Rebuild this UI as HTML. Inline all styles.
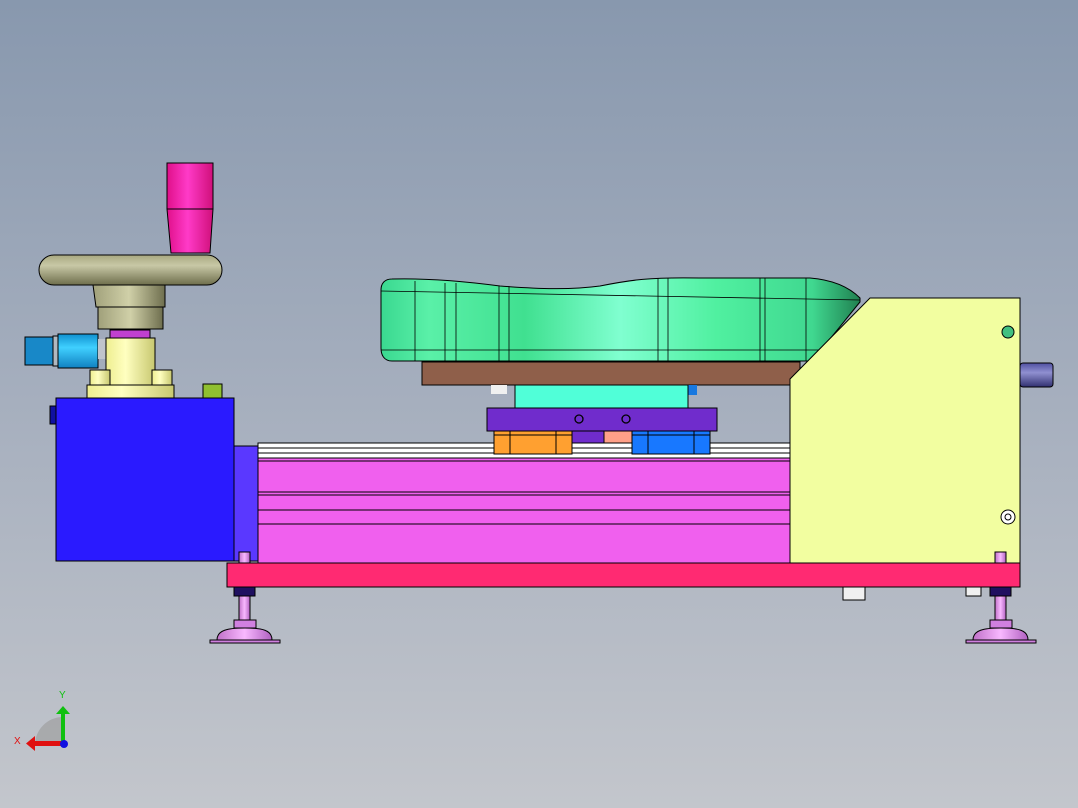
<!DOCTYPE html>
<html><head><meta charset="utf-8"><style>
html,body{margin:0;padding:0;width:1078px;height:808px;overflow:hidden}
svg{display:block}
</style></head><body>
<svg width="1078" height="808" viewBox="0 0 1078 808" xmlns="http://www.w3.org/2000/svg" font-family="Liberation Sans, sans-serif">
<defs>
<linearGradient id="bg" x1="0" y1="0" x2="0" y2="1"><stop offset="0" stop-color="#8898ae"/><stop offset="0.5" stop-color="#a6afbe"/><stop offset="1" stop-color="#c3c6cc"/></linearGradient>
<linearGradient id="pink" x1="0" x2="1"><stop offset="0" stop-color="#e0108a"/><stop offset="0.45" stop-color="#ff3ac8"/><stop offset="1" stop-color="#d0107a"/></linearGradient>
<linearGradient id="torus" x1="0" y1="0" x2="0" y2="1"><stop offset="0" stop-color="#a8a880"/><stop offset="0.35" stop-color="#c8c8a6"/><stop offset="1" stop-color="#6e6e4c"/></linearGradient>
<linearGradient id="hub" x1="0" x2="1"><stop offset="0" stop-color="#a0a07a"/><stop offset="0.5" stop-color="#d0d0a8"/><stop offset="1" stop-color="#6e6e4e"/></linearGradient>
<linearGradient id="cyl" x1="0" y1="0" x2="0" y2="1"><stop offset="0" stop-color="#1090d0"/><stop offset="0.4" stop-color="#40d0ff"/><stop offset="1" stop-color="#1080c0"/></linearGradient>
<linearGradient id="yel" x1="0" x2="1"><stop offset="0" stop-color="#eeee90"/><stop offset="0.4" stop-color="#ffffc0"/><stop offset="1" stop-color="#c8c870"/></linearGradient>
<linearGradient id="seat" x1="0" x2="1"><stop offset="0" stop-color="#3ad890"/><stop offset="0.1" stop-color="#5af0a8"/><stop offset="0.3" stop-color="#40e090"/><stop offset="0.5" stop-color="#80ffd0"/><stop offset="0.7" stop-color="#50f0a0"/><stop offset="0.9" stop-color="#40d890"/><stop offset="1" stop-color="#208050"/></linearGradient>
<linearGradient id="foot" x1="0" x2="1"><stop offset="0" stop-color="#c070c8"/><stop offset="0.5" stop-color="#f8b8ff"/><stop offset="1" stop-color="#b060c0"/></linearGradient>
<linearGradient id="shaft" x1="0" y1="0" x2="0" y2="1"><stop offset="0" stop-color="#5050a0"/><stop offset="0.4" stop-color="#9090d0"/><stop offset="1" stop-color="#303070"/></linearGradient>
</defs>
<rect width="1078" height="808" fill="url(#bg)"/>
<g stroke="#000" stroke-width="1">
<!-- pink handle -->
<rect x="167" y="163" width="46" height="46" fill="url(#pink)"/>
<path d="M167 209 L213 209 L210 253 L171 253 Z" fill="url(#pink)"/>
<!-- handwheel -->
<rect x="39" y="255" width="183" height="30" rx="15" fill="url(#torus)"/>
<path d="M93 285 L165 285 L165 307 L96 307 Z" fill="url(#hub)"/>
<rect x="98" y="307" width="65" height="22" fill="url(#hub)"/>
<rect x="110" y="330" width="40" height="8" fill="#c040d0"/>
<!-- blue cylinder -->
<rect x="25" y="337" width="28" height="28" fill="#1888c8"/>
<rect x="53" y="336" width="24" height="30" fill="#b0b8c0"/>
<rect x="58" y="334" width="40" height="34" fill="url(#cyl)"/>
<rect x="98" y="339" width="9" height="20" fill="#c0c4cc" stroke="none"/>
<!-- yellow column -->
<rect x="106" y="338" width="49" height="47" fill="url(#yel)"/>
<rect x="90" y="370" width="20" height="15" fill="url(#yel)"/>
<rect x="152" y="370" width="20" height="15" fill="url(#yel)"/>
<rect x="87" y="385" width="87" height="13" fill="url(#yel)"/>
<rect x="203" y="384" width="19" height="14" fill="#90c030"/>
<!-- blue box -->
<rect x="50" y="406" width="7" height="18" fill="#1010a0"/>
<rect x="56" y="398" width="178" height="163" fill="#2a1aff"/>
<rect x="234" y="446" width="24" height="115" fill="#5a38ff"/>
<!-- rails -->
<rect x="258" y="443" width="532" height="15" fill="#fff"/>
<line x1="258" y1="448" x2="790" y2="448"/><line x1="258" y1="453" x2="790" y2="453"/>
<rect x="258" y="458" width="532" height="105" fill="#f060ee"/>
<line x1="258" y1="461" x2="790" y2="461"/>
<line x1="258" y1="492" x2="790" y2="492"/><line x1="258" y1="495" x2="790" y2="495"/>
<line x1="258" y1="510" x2="790" y2="510"/><line x1="258" y1="524" x2="790" y2="524"/>
<!-- seat -->
<path d="M392 279 C430 278 470 282 500 286 C540 289 570 290 600 286 C630 280 650 277 700 278 L810 278 C835 280 850 288 860 298 L860 302 C845 320 830 340 815 356 L812 361 L392 361 C384 361 381 355 381 348 L381 290 C381 283 385 279 392 279 Z" fill="url(#seat)"/>
<line x1="381" y1="291" x2="860" y2="300" stroke-width="0.8"/>
<line x1="381" y1="350" x2="820" y2="350" stroke-width="0.8"/>
<g stroke-width="0.8"><line x1="415" y1="281" x2="415" y2="361"/><line x1="445" y1="283" x2="445" y2="361"/><line x1="456" y1="283" x2="456" y2="361"/><line x1="499" y1="286" x2="499" y2="361"/><line x1="509" y1="286" x2="509" y2="361"/><line x1="658" y1="278" x2="658" y2="361"/><line x1="668" y1="278" x2="668" y2="361"/><line x1="760" y1="278" x2="760" y2="361"/><line x1="765" y1="278" x2="765" y2="361"/><line x1="806" y1="278" x2="806" y2="361"/></g>
<!-- brown -->
<rect x="422" y="362" width="378" height="23" fill="#8f5f4a"/>
<rect x="491" y="385" width="16" height="9" fill="#f0f0f0" stroke="none"/>
<rect x="688" y="385" width="9" height="10" fill="#1878e0" stroke="none"/>
<rect x="515" y="385" width="173" height="23" fill="#50ffd8"/>
<rect x="487" y="408" width="230" height="23" fill="#702ccc"/>
<circle cx="579" cy="419" r="4" fill="none" stroke-width="1.3"/><circle cx="626" cy="419" r="4" fill="none" stroke-width="1.3"/>
<rect x="572" y="431" width="32" height="12" fill="#702ccc"/>
<rect x="604" y="431" width="28" height="12" fill="#ffa088"/>
<rect x="494" y="431" width="78" height="23" fill="#ffa030"/>
<line x1="510" y1="431" x2="510" y2="454"/><line x1="556" y1="431" x2="556" y2="454"/><line x1="494" y1="435" x2="572" y2="435"/>
<rect x="632" y="431" width="78" height="23" fill="#1878ff"/>
<line x1="648" y1="431" x2="648" y2="454"/><line x1="694" y1="431" x2="694" y2="454"/><line x1="632" y1="435" x2="710" y2="435"/>
<!-- right plate -->
<rect x="1020" y="363" width="33" height="24" rx="3" fill="url(#shaft)"/>
<path d="M870 298 L1020 298 L1020 563 L790 563 L790 379 Z" fill="#f2fea0"/>
<circle cx="1008" cy="332" r="6" fill="#40c080"/>
<circle cx="1008" cy="517" r="7" fill="#fff"/><circle cx="1008" cy="517" r="3" fill="none"/>
<!-- base -->
<rect x="227" y="563" width="793" height="24" fill="#ff2a72"/>
<rect x="843" y="587" width="22" height="13" fill="#f0f0f0"/>
<rect x="966" y="587" width="15" height="9" fill="#f0f0f0"/>
<!-- feet -->
<g id="f1">
<rect x="239" y="552" width="11" height="11" fill="url(#foot)"/>
<rect x="234" y="587" width="21" height="9" fill="#201060"/>
<rect x="239" y="596" width="11" height="25" fill="url(#foot)"/>
<rect x="234" y="620" width="22" height="8" fill="#d080e0"/>
<path d="M217 640 C217 630 228 628 245 628 C262 628 272 630 272 640 Z" fill="url(#foot)"/>
<rect x="210" y="640" width="70" height="3" fill="#d080e0"/>
</g>
<use href="#f1" x="756"/>
</g>
<!-- axes -->
<path d="M35 745 A28 28 0 0 1 63 717 L63 745 Z" fill="#9a9a9a" opacity="0.6"/>
<rect x="61" y="712" width="4" height="31" fill="#10c010"/>
<path d="M56 714 L63 706 L70 714 Z" fill="#10c010"/>
<rect x="34" y="741" width="28" height="5" fill="#e01010"/>
<path d="M35 736 L26 743.5 L35 751 Z" fill="#e01010"/>
<circle cx="64" cy="744" r="4" fill="#1010e0"/>
<text x="59" y="698" font-size="10" fill="#10c010">Y</text>
<text x="14" y="744" font-size="10" fill="#e01010">X</text>
</svg>
</body></html>
